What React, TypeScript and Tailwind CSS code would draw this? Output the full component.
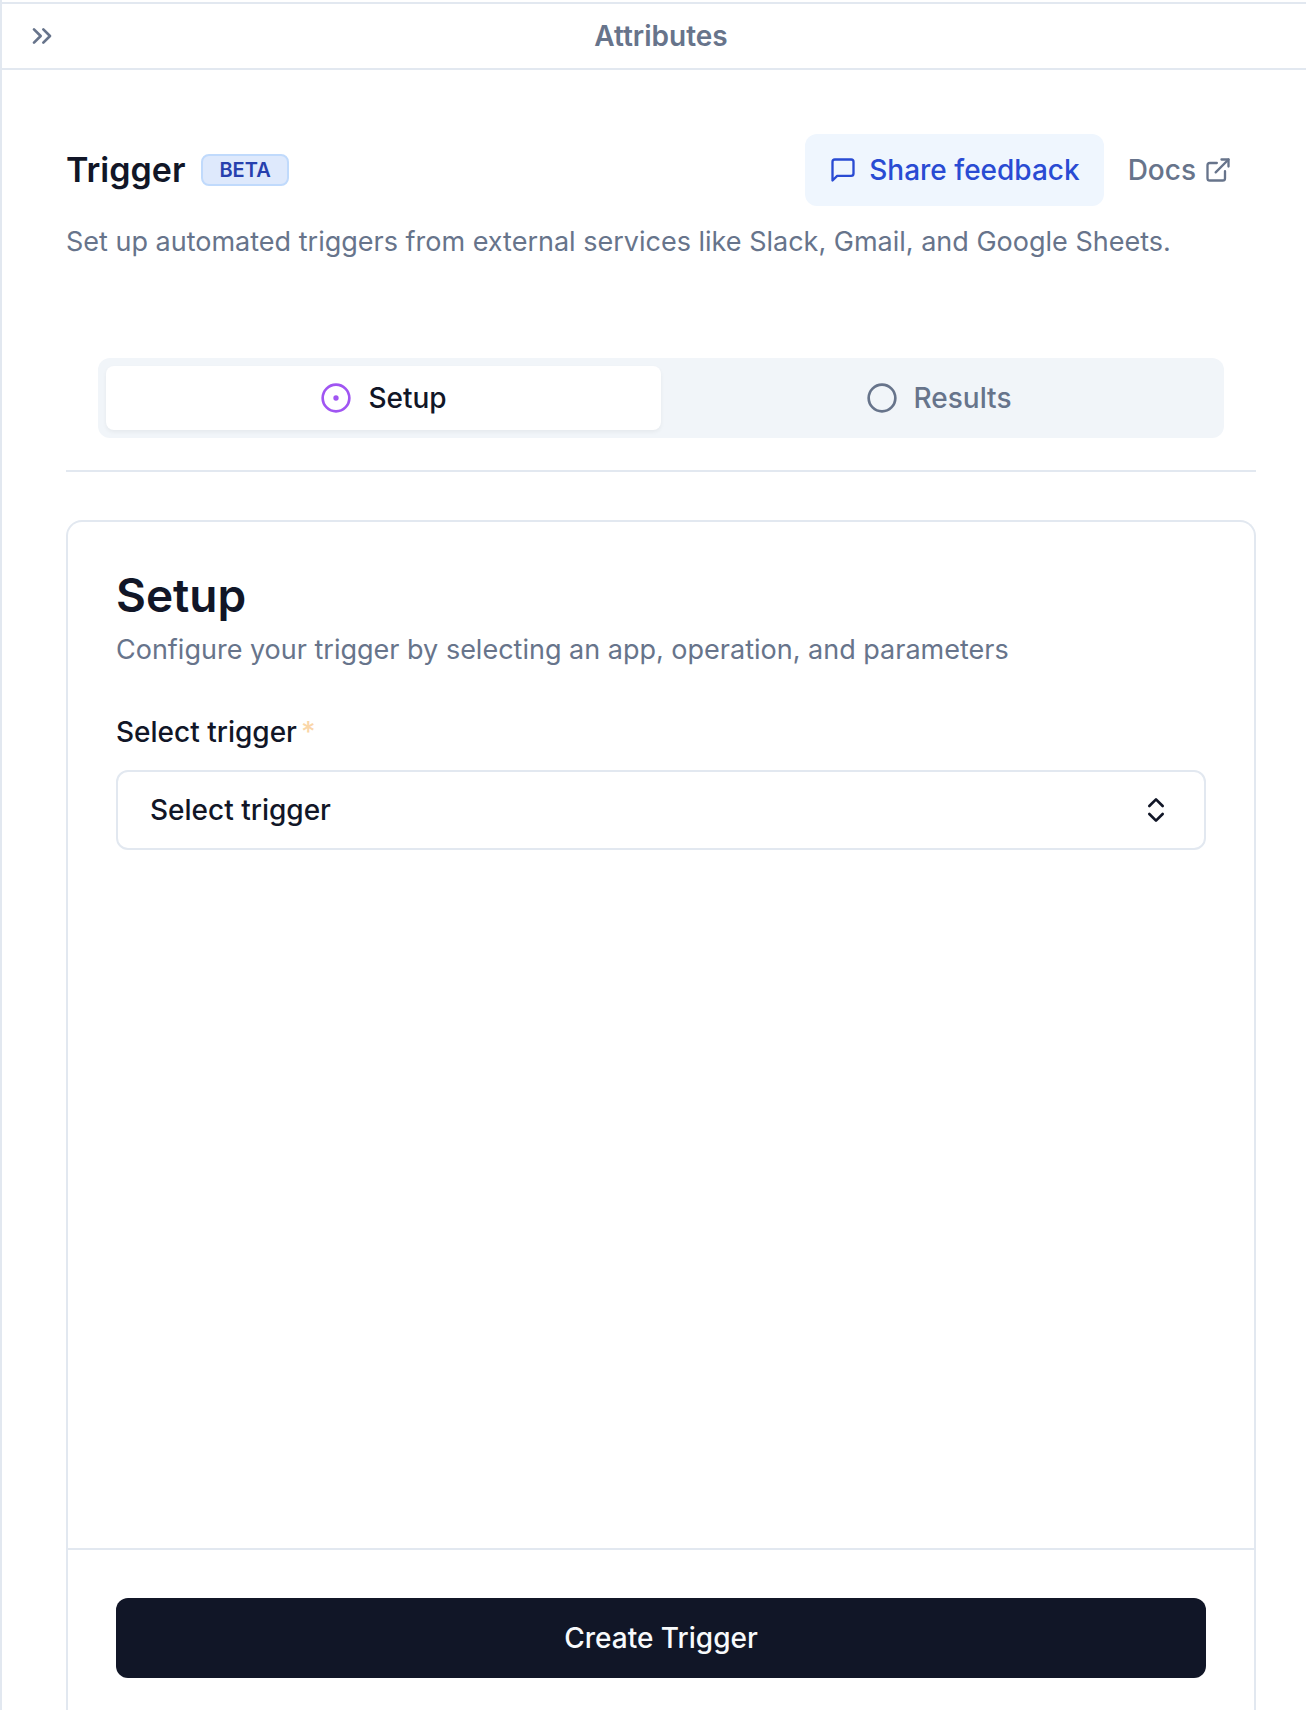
import { useState } from "react";
import { ChevronsRight, ChevronsUpDown, Circle, CircleDot } from "lucide-react";

const tabs = [
  { id: "setup", label: "Setup" },
  { id: "results", label: "Results" },
];

function FeedbackIcon() {
  return (
    <svg
      className="size-7"
      viewBox="0 0 24 24"
      fill="none"
      stroke="currentColor"
      strokeWidth="2"
      strokeLinecap="round"
      strokeLinejoin="round"
      aria-hidden="true"
    >
      <path d="M21 15a2 2 0 0 1-2 2H7l-4 4V5a2 2 0 0 1 2-2h14a2 2 0 0 1 2 2z" />
    </svg>
  );
}

function ExternalIcon() {
  return (
    <svg
      className="size-7"
      viewBox="0 0 24 24"
      fill="none"
      stroke="currentColor"
      strokeWidth="2"
      strokeLinecap="round"
      strokeLinejoin="round"
      aria-hidden="true"
    >
      <path d="M15 3h6v6" />
      <path d="M10 14 21 3" />
      <path d="M18 13v6a2 2 0 0 1-2 2H5a2 2 0 0 1-2-2V8a2 2 0 0 1 2-2h6" />
    </svg>
  );
}

export default function App() {
  const [activeTab, setActiveTab] = useState("setup");

  return (
    <div className="flex min-h-screen flex-col border-l-2 border-[#e2e8f0] bg-white pt-0.5 font-[Inter,sans-serif] text-[28px] leading-10 text-[#111627]">
      {/* Panel header */}
      <header className="grid grid-cols-[1fr_auto_1fr] items-center border-y-2 border-[#e2e8f0] py-3 pr-2.5 pl-6 text-[#67748b]">
        <button type="button" aria-label="Collapse panel" className="justify-self-start">
          <ChevronsRight className="size-8" />
        </button>
        <h1 className="font-semibold">Attributes</h1>
      </header>

      <main className="flex flex-1 flex-col pt-16 pr-[50px] pl-16">
        {/* Title row */}
        <div className="flex items-center justify-between">
          <div className="flex items-center gap-4">
            <h2 className="text-[34px] font-semibold">Trigger</h2>
            <span className="rounded-lg border-2 border-[#c0dafc] bg-[#dee9fc] px-4 text-[20px] leading-7 font-semibold text-[#2640ae]">
              BETA
            </span>
          </div>
          <div className="flex items-center">
            <button
              type="button"
              className="flex items-center gap-3 rounded-xl bg-[#eff6fe] px-6 py-4 font-medium text-[#294bd3]"
            >
              <FeedbackIcon />
              Share feedback
            </button>
            <a
              href="#docs"
              className="flex items-center gap-2 px-6 font-medium text-[#67748b]"
            >
              Docs
              <ExternalIcon />
            </a>
          </div>
        </div>
        <p className="mt-4 text-[27px] text-[#67748b]">
          Set up automated triggers from external services like Slack, Gmail, and
          Google Sheets.
        </p>

        {/* Tabs */}
        <div className="mt-24 border-b-2 border-[#e2e8f0] px-8 pb-8">
          <div role="tablist" className="flex rounded-xl bg-[#f1f5f9] p-2">
            {tabs.map((tab) => {
              const isActive = activeTab === tab.id;

              return (
                <button
                  key={tab.id}
                  type="button"
                  role="tab"
                  aria-selected={isActive}
                  onClick={() => setActiveTab(tab.id)}
                  className={`flex flex-1 items-center justify-center gap-4 rounded-lg py-3 font-medium ${
                    isActive
                      ? "bg-white text-[#111627] shadow-[0_2px_4px_rgba(0,0,0,0.05)]"
                      : "text-[#67748b]"
                  }`}
                >
                  {isActive ? (
                    <CircleDot className="size-8 text-[#a055f2]" />
                  ) : (
                    <Circle className="size-8" />
                  )}
                  {tab.label}
                </button>
              );
            })}
          </div>
        </div>

        {/* Setup card */}
        <section className="mt-12 flex flex-1 flex-col rounded-t-2xl border-2 border-b-0 border-[#e2e8f0]">
          <div className="flex-1 p-12">
            <h3 className="text-[46px] leading-[50px] font-semibold">Setup</h3>
            <p className="mt-2.5 text-[27px] text-[#67748b]">
              Configure your trigger by selecting an app, operation, and parameters
            </p>

            <div className="mt-[42px]">
              <label htmlFor="trigger" className="flex gap-1 font-medium">
                Select trigger
                <span className="text-[#fad6a8]">*</span>
              </label>
              <div className="relative mt-[18px]">
                <select
                  id="trigger"
                  className="h-20 w-full appearance-none rounded-xl border-2 border-[#e2e8f0] bg-white px-8 font-medium"
                >
                  <option>Select trigger</option>
                </select>
                <ChevronsUpDown className="pointer-events-none absolute inset-y-0 right-[34px] my-auto size-8" />
              </div>
            </div>
          </div>

          <div className="border-t-2 border-[#e2e8f0] px-12 pt-12 pb-8">
            <button
              type="button"
              className="w-full rounded-xl bg-[#111627] py-5 font-medium text-[#f8fafc]"
            >
              Create Trigger
            </button>
          </div>
        </section>
      </main>
    </div>
  );
}
